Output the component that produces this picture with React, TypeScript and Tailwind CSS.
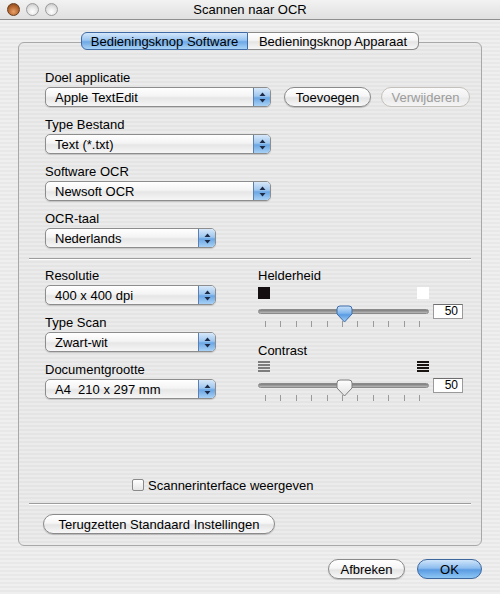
import React from 'react'

const font = { fontFamily: '"Liberation Sans", Arial, sans-serif' }

const Arrows = () => (
  <svg width="7" height="11" viewBox="0 0 7 11">
    <path d="M3.5 0.5 L6.5 4 L0.5 4 Z" fill="#1d2a45" />
    <path d="M3.5 10.5 L6.5 7 L0.5 7 Z" fill="#1d2a45" />
  </svg>
)

const PopUp = ({ value, width }: { value: string; width: string }) => (
  <div
    className={`${width} shrink-0 h-[20px] flex items-stretch rounded-[5px] border border-[#8d8d8d] overflow-hidden bg-[linear-gradient(180deg,#ffffff_0%,#f4f4f4_45%,#e6e6e6_55%,#f6f6f6_100%)] shadow-[0_1px_1px_rgba(0,0,0,0.15)]`}
  >
    <div className="flex-1 flex items-center pl-[9px] text-[13px] text-black leading-none whitespace-pre">{value}</div>
    <div className="w-[17px] flex items-center justify-center border-l border-[#5a7fb0] bg-[linear-gradient(180deg,#d7e8f9_0%,#9fc7ef_45%,#6aa6e4_55%,#a8d1f5_100%)]">
      <Arrows />
    </div>
  </div>
)

const Pill = ({
  label,
  width,
  disabled,
  primary,
}: {
  label: string
  width: string
  disabled?: boolean
  primary?: boolean
}) => (
  <div
    className={`${width} shrink-0 h-[20px] rounded-full flex items-center justify-center text-[13px] leading-none border ${
      primary
        ? 'border-[#3e679e] text-black bg-[linear-gradient(180deg,#cfe5fa_0%,#8dbdee_45%,#5a9be2_55%,#8ec6f4_100%)]'
        : disabled
          ? 'border-[#c4c0bb] text-[#9c9c9c] bg-[linear-gradient(180deg,#fafafa_0%,#f1f1f1_50%,#e9e9e9_55%,#f5f5f5_100%)]'
          : 'border-[#8a8a8a] text-black bg-[linear-gradient(180deg,#ffffff_0%,#f6f6f6_45%,#e4e4e4_55%,#f8f8f8_100%)] shadow-[0_1px_1px_rgba(0,0,0,0.2)]'
    }`}
  >
    {label}
  </div>
)

const Label = ({ children }: { children: React.ReactNode }) => (
  <div className="h-[16px] flex items-center text-[13px] text-black leading-none">{children}</div>
)

const Thumb = ({ blue }: { blue?: boolean }) => (
  <svg width="17" height="18" viewBox="0 0 17 18" className="absolute left-[77px] top-[-5px]">
    <defs>
      <linearGradient id={blue ? 'tb' : 'tw'} x1="0" y1="0" x2="0" y2="1">
        {blue ? (
          <>
            <stop offset="0" stopColor="#cfe4fa" />
            <stop offset="0.45" stopColor="#7fb5ec" />
            <stop offset="0.55" stopColor="#5a9be2" />
            <stop offset="1" stopColor="#a6d1f6" />
          </>
        ) : (
          <>
            <stop offset="0" stopColor="#ffffff" />
            <stop offset="0.5" stopColor="#f0f0f0" />
            <stop offset="1" stopColor="#e2e2e2" />
          </>
        )}
      </linearGradient>
    </defs>
    <path
      d="M1 4 Q1 1 4 1 L13 1 Q16 1 16 4 L16 9 L8.5 17 L1 9 Z"
      fill={`url(#${blue ? 'tb' : 'tw'})`}
      stroke={blue ? '#3f6ea8' : '#7d7d7d'}
      strokeWidth="1"
    />
  </svg>
)

const Slider = ({ blue }: { blue?: boolean }) => (
  <div className="flex flex-col">
    <div className="flex items-center gap-[4px] h-[16px]">
      <div className="relative shrink-0 w-[171px] h-[5px] rounded-full bg-[linear-gradient(180deg,#7c7c7c,#b9b9b9)] border border-[#8a8a8a]">
        <Thumb blue={blue} />
      </div>
      <div className="shrink-0 w-[30px] h-[15px] bg-white border border-[#9a9a9a] border-t-[#6f6f6f] flex items-center justify-end pr-[4px] text-[12px] leading-none">
        50
      </div>
    </div>
    <div className="mt-[2px] h-[6px] w-[171px] pl-[7px] pr-[9px] flex justify-between">
      {Array.from({ length: 11 }).map((_, i) => (
        <div key={i} className="w-px h-[6px] bg-[#9a9a9a]" />
      ))}
    </div>
  </div>
)

const Stripes = ({ color }: { color: string }) => (
  <svg width="12" height="12" viewBox="0 0 12 12">
    {[0, 3, 6, 9].map((y) => (
      <rect key={y} x="0" y={y} width="12" height="2" fill={color} />
    ))}
  </svg>
)

const Separator = () => <div className="h-[2px] border-t border-[#9d9d9d] border-b border-b-white mx-[10px]" />

export default function App() {
  return (
    <div
      style={font}
      className="w-[500px] h-[594px] flex flex-col text-black bg-[repeating-linear-gradient(180deg,#efefef_0px,#efefef_2px,#e8e8e8_2px,#e8e8e8_4px)]"
    >
      <div className="h-[20px] relative flex items-center justify-center border-b border-[#8f8f8f] bg-[linear-gradient(180deg,#f2f2f2,#e0e0e0)]">
        <div className="absolute left-[7px] top-[3px] flex gap-[6px]">
          <div className="w-[13px] h-[13px] rounded-full border border-[#6a3b1b] bg-[radial-gradient(circle_at_50%_70%,#e7a36a_0%,#b5652f_55%,#7a3f16_100%)]" />
          <div className="w-[13px] h-[13px] rounded-full border border-[#9b9b9b] bg-[radial-gradient(circle_at_50%_70%,#ffffff_0%,#e2e2e2_55%,#b9b9b9_100%)]" />
          <div className="w-[13px] h-[13px] rounded-full border border-[#9b9b9b] bg-[radial-gradient(circle_at_50%_70%,#ffffff_0%,#e2e2e2_55%,#b9b9b9_100%)]" />
        </div>
        <div className="text-[13px] leading-none">Scannen naar OCR</div>
      </div>

      <div className="mt-[12px] h-[18px] flex justify-center relative z-10">
        <div className="w-[167px] rounded-l-[6px] border border-[#3f6aa3] flex items-center justify-center text-[13px] leading-none bg-[linear-gradient(180deg,#d4e7fa_0%,#9ac6f1_45%,#6ea8e6_55%,#a9d3f6_100%)]">
          Bedieningsknop Software
        </div>
        <div className="w-[171px] rounded-r-[6px] border border-l-0 border-[#8a8a8a] flex items-center justify-center text-[13px] leading-none bg-[linear-gradient(180deg,#ffffff_0%,#f5f5f5_45%,#e5e5e5_55%,#f7f7f7_100%)]">
          Bedieningsknop Apparaat
        </div>
      </div>

      <div className="mx-[18px] -mt-[8px] rounded-[6px] border border-[#a8a8a8] pt-[26px] pb-[11px] flex flex-col bg-[repeating-linear-gradient(180deg,#ebebeb_0px,#ebebeb_2px,#e4e4e4_2px,#e4e4e4_4px)]">
        <div className="pl-[26px] flex flex-col">
          <Label>Doel applicatie</Label>
          <div className="mt-[2px] flex items-center">
            <PopUp value="Apple TextEdit" width="w-[226px]" />
            <div className="ml-[13px] shrink-0">
              <Pill label="Toevoegen" width="w-[87px]" />
            </div>
            <div className="ml-[10px] shrink-0">
              <Pill label="Verwijderen" width="w-[89px]" disabled />
            </div>
          </div>
          <div className="mt-[9px]">
            <Label>Type Bestand</Label>
          </div>
          <div className="mt-[2px]">
            <PopUp value="Text (*.txt)" width="w-[226px]" />
          </div>
          <div className="mt-[9px]">
            <Label>Software OCR</Label>
          </div>
          <div className="mt-[2px]">
            <PopUp value="Newsoft OCR" width="w-[226px]" />
          </div>
          <div className="mt-[9px]">
            <Label>OCR-taal</Label>
          </div>
          <div className="mt-[2px]">
            <PopUp value="Nederlands" width="w-[171px]" />
          </div>
        </div>

        <div className="mt-[10px]">
          <Separator />
        </div>

        <div className="mt-[7px] pl-[26px] flex">
          <div className="w-[213px] shrink-0 flex flex-col">
            <Label>Resolutie</Label>
            <div className="mt-[2px]">
              <PopUp value="400 x 400 dpi" width="w-[171px]" />
            </div>
            <div className="mt-[9px]">
              <Label>Type Scan</Label>
            </div>
            <div className="mt-[2px]">
              <PopUp value="Zwart-wit" width="w-[171px]" />
            </div>
            <div className="mt-[9px]">
              <Label>Documentgrootte</Label>
            </div>
            <div className="mt-[2px]">
              <PopUp value="A4  210 x 297 mm" width="w-[171px]" />
            </div>
          </div>

          <div className="shrink-0 flex flex-col">
            <Label>Helderheid</Label>
            <div className="mt-[4px] w-[171px] flex justify-between">
              <div className="w-[12px] h-[12px] bg-[#140e10]" />
              <div className="w-[12px] h-[12px] bg-white" />
            </div>
            <div className="mt-[4px]">
              <Slider blue />
            </div>
            <div className="mt-[15px]">
              <Label>Contrast</Label>
            </div>
            <div className="mt-[3px] w-[171px] flex justify-between">
              <Stripes color="#7d7d7d" />
              <Stripes color="#1a1412" />
            </div>
            <div className="mt-[4px]">
              <Slider />
            </div>
          </div>
        </div>

        <div className="mt-[77px] pl-[113px] h-[14px] flex items-center gap-[4px]">
          <div className="w-[12px] h-[12px] rounded-[2px] border border-[#8a8a8a] bg-[linear-gradient(180deg,#ffffff,#e6e6e6)]" />
          <div className="text-[13px] leading-none">Scannerinterface weergeven</div>
        </div>

        <div className="mt-[11px]">
          <Separator />
        </div>

        <div className="mt-[9px] pl-[24px]">
          <Pill label="Terugzetten Standaard Instellingen" width="w-[232px]" />
        </div>
      </div>

      <div className="mt-[13px] flex justify-end gap-[12px] pr-[18px]">
        <Pill label="Afbreken" width="w-[77px]" />
        <Pill label="OK" width="w-[65px]" primary />
      </div>
    </div>
  )
}
